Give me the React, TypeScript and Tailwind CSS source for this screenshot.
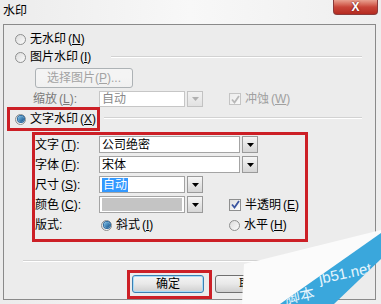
import type { ReactNode } from "react";

const font = { fontFamily: "'Liberation Sans', 'Noto Sans CJK SC', sans-serif" };

function Mn({ text, k, tail = "" }: { text: string; k: string; tail?: string }) {
  return (
    <span className="whitespace-nowrap">
      {text}
      <span className="ml-[2px]">(</span>
      <span className="underline">{k}</span>
      <span>)</span>
      {tail}
    </span>
  );
}

function Radio({ checked = false }: { checked?: boolean }) {
  return (
    <span className="flex h-[11px] w-[11px] shrink-0 items-center justify-center rounded-full border border-[#8e8f8f] bg-gradient-to-br from-[#dcdcdc] to-[#fbfbfb]">
      {checked && (
        <span className="h-[6px] w-[6px] rounded-full bg-gradient-to-br from-[#7fc3ec] to-[#0f4f86] shadow-[0_0_0_1px_#2a6aa0]" />
      )}
    </span>
  );
}

function Check({ checked = false, disabled = false }: { checked?: boolean; disabled?: boolean }) {
  return (
    <span
      className={`flex h-[12px] w-[12px] shrink-0 items-center justify-center border bg-gradient-to-br ${
        disabled ? "border-[#c4c4c4] from-[#ececec] to-[#f8f8f8]" : "border-[#8e8f8f] from-[#dedede] to-white"
      }`}
    >
      {checked && (
        <svg width="9" height="9" viewBox="0 0 9 9">
          <path
            d="M1 4.5 L3.5 7.5 L8 1"
            fill="none"
            stroke={disabled ? "#b8b8b8" : "#3b55a0"}
            strokeWidth="1.8"
          />
        </svg>
      )}
    </span>
  );
}

function Arrow({ disabled = false }: { disabled?: boolean }) {
  return (
    <span
      className={`flex h-full w-[16px] shrink-0 items-center justify-center border bg-gradient-to-b ${
        disabled ? "border-[#c2c2c2] from-[#f2f2f2] to-[#e2e2e2]" : "border-[#9a9a9a] from-[#f6f6f6] to-[#d6d6d6]"
      }`}
    >
      <svg width="7" height="4" viewBox="0 0 7 4">
        <path d="M0 0 H7 L3.5 4 Z" fill={disabled ? "#b0b0b0" : "#000"} />
      </svg>
    </span>
  );
}

function Combo({
  w,
  children,
  disabled = false,
  swatch = false,
}: {
  w: string;
  children?: ReactNode;
  disabled?: boolean;
  swatch?: boolean;
}) {
  return (
    <div className={`flex h-full ${w}`}>
      <div
        className={`flex flex-1 items-center border pl-[2px] ${
          disabled ? "border-[#c6c6c6] bg-white text-[#8a8a8a]" : "border-[#a4a4a4] bg-white"
        }`}
      >
        {swatch ? <div className="mr-[2px] h-[13px] w-full bg-[#c4c4c4]" /> : children}
      </div>
      <div className="ml-[2px] h-full">
        <Arrow disabled={disabled} />
      </div>
    </div>
  );
}

function Btn({ children, def = false, cls = "" }: { children: ReactNode; def?: boolean; cls?: string }) {
  return (
    <div
      className={`flex items-center justify-center rounded-[3px] border bg-gradient-to-b from-[#f4f4f4] via-[#e8e8e8] to-[#cfcfcf] ${
        def ? "border-[#3c7fb1] shadow-[inset_0_0_0_1px_#a9dcf7]" : "border-[#707070]"
      } ${cls}`}
    >
      {children}
    </div>
  );
}

export default function App() {
  return (
    <div
      className="relative h-[304px] w-[381px] overflow-hidden bg-gradient-to-r from-[#ececec] via-[#f8f8f8] to-[#eeeeee] text-[12px] leading-none text-black"
      style={font}
    >
      {/* title bar */}
      <div className="flex h-[24px] items-start pl-[3px] pt-[5px] text-[12px]">水印</div>
      <div className="absolute right-[3px] top-0 flex h-[15px] w-[45px] items-center justify-center rounded-b-[4px] border border-t-0 border-[#8a3a3a] bg-gradient-to-b from-[#e8a090] via-[#c9463a] to-[#b52a20]">
        <span className="text-[12px] font-bold text-white [text-shadow:0_0_2px_#5a0000]">X</span>
      </div>

      {/* panel */}
      <div className="ml-[3px] flex h-[276px] w-[373px] flex-col border border-[#8a8a8a] bg-[#ececec]">
        <div className="mt-[6px] flex h-[16px] items-center pl-[11px]">
          <Radio />
          <span className="ml-[4px]">
            <Mn text="无水印" k="N" />
          </span>
        </div>

        <div className="mt-[2px] flex h-[16px] items-center pl-[11px]">
          <Radio />
          <span className="ml-[4px]">
            <Mn text="图片水印" k="I" />
          </span>
          <div className="ml-[20px] mr-[13px] h-[2px] flex-1 border-t border-b border-t-[#d2d2d2] border-b-white" />
        </div>

        <Btn cls="mt-[3px] ml-[31px] h-[20px] w-[98px] border-[#adb2b5] from-[#f4f4f4] via-[#f4f4f4] to-[#f0f0f0] text-[#a3a3a3]">
          <span>
            选择图片(<span className="underline">P</span>)...
          </span>
        </Btn>

        <div className="mt-[3px] flex h-[16px] items-center pl-[29px] text-[#7a7a7a]">
          <span className="w-[66px]">
            <Mn text="缩放" k="L" tail=":" />
          </span>
          <Combo w="w-[104px]" disabled>
            <span>自动</span>
          </Combo>
          <span className="ml-[26px]">
            <Check checked disabled />
          </span>
          <span className="ml-[4px] text-[#a0a0a0]">
            <Mn text="冲蚀" k="W" />
          </span>
        </div>

        <div className="flex h-[24px] items-start">
          <div className="ml-[3px] flex h-[24px] w-[93px] items-center border-[3px] border-[#cc1f26] pl-[5px]">
            <Radio checked />
            <span className="ml-[4px]">
              <Mn text="文字水印" k="X" />
            </span>
          </div>
          <div className="ml-[4px] mr-[13px] mt-[10px] h-[2px] flex-1 border-t border-b border-t-[#d2d2d2] border-b-white" />
        </div>

        <div className="ml-[28px] mt-[1px] flex h-[110px] w-[276px] flex-col gap-[3px] border-[3px] border-[#cc1f26] pt-[1px]">
          <div className="flex h-[17px] items-center">
            <span className="w-[64px]">
              <Mn text="文字" k="T" tail=":" />
            </span>
            <Combo w="w-[159px]">
              <span>公司绝密</span>
            </Combo>
          </div>
          <div className="flex h-[17px] items-center">
            <span className="w-[64px]">
              <Mn text="字体" k="F" tail=":" />
            </span>
            <Combo w="w-[159px]">
              <span>宋体</span>
            </Combo>
          </div>
          <div className="flex h-[17px] items-center">
            <span className="w-[64px]">
              <Mn text="尺寸" k="S" tail=":" />
            </span>
            <Combo w="w-[104px]">
              <span className="bg-[#3399ff] px-[1px] py-[1px] text-white">自动</span>
            </Combo>
          </div>
          <div className="flex h-[17px] items-center">
            <span className="w-[64px]">
              <Mn text="颜色" k="C" tail=":" />
            </span>
            <Combo w="w-[104px]" swatch />
            <span className="ml-[26px]">
              <Check checked />
            </span>
            <span className="ml-[4px]">
              <Mn text="半透明" k="E" />
            </span>
          </div>
          <div className="flex h-[18px] items-center">
            <span className="w-[66px] shrink-0">版式:</span>
            <div className="flex w-[128px] shrink-0 items-center">
              <Radio checked />
              <span className="ml-[4px]">
                <Mn text="斜式" k="I" />
              </span>
            </div>
            <Radio />
            <span className="ml-[4px]">
              <Mn text="水平" k="H" />
            </span>
          </div>
        </div>

        <div className="ml-[19px] mr-[13px] mt-[18px] h-[2px] border-t border-b border-t-[#d2d2d2] border-b-white" />

        <div className="mt-[8px] flex items-start">
          <div className="ml-[123px] h-[29px] w-[85px] border-[3px] border-[#cc1f26] pl-[2px] pt-[2px]">
            <Btn def cls="h-[18px] w-[72px]">
              确定
            </Btn>
          </div>
          <Btn cls="ml-[3px] mt-[5px] h-[18px] w-[72px]">取消</Btn>
        </div>
      </div>

      {/* site watermark in the corner */}
      <svg className="pointer-events-none absolute inset-0" width="381" height="304" viewBox="0 0 381 304">
        <defs>
          <clipPath id="band">
            <polygon points="280,304 381,233 381,259 334,304" />
          </clipPath>
        </defs>
        <polygon points="244,264 381,230 381,234 280,304 242,304" fill="#fbfbfb" />
        <polygon points="280,304 381,233 381,259 334,304" fill="#3aa7dc" />
        <g clipPath="url(#band)" fill="#e6f5fc" fontSize="15" style={font}>
          <text x="286" y="304" transform="rotate(-12 286 304)">脚本</text>
          <text x="320" y="284" transform="rotate(-12 320 284)">jb51.net</text>
        </g>
      </svg>
    </div>
  );
}
